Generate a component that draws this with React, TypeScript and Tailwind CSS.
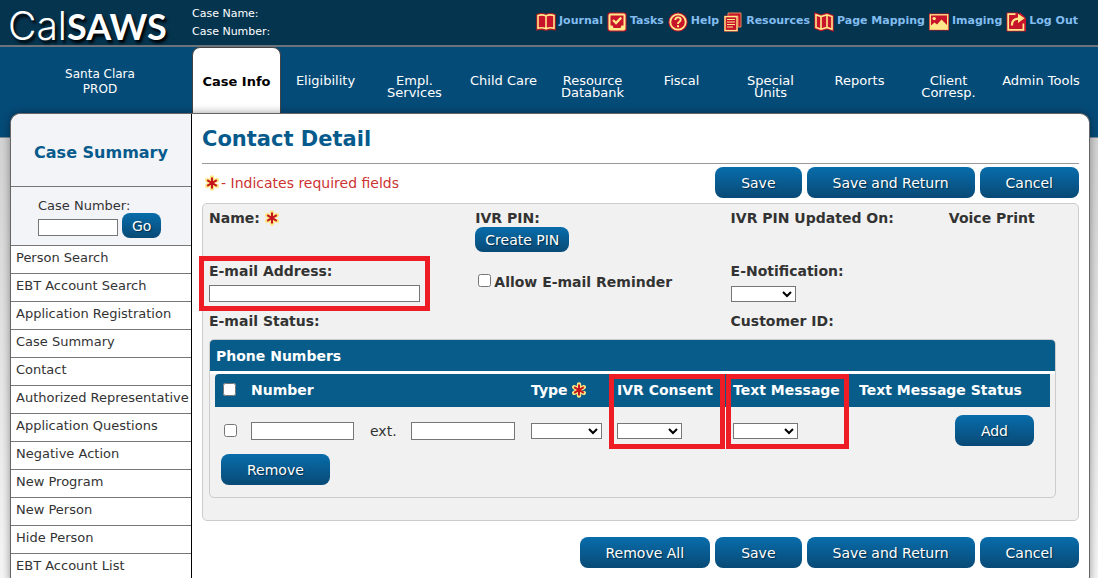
import React from 'react';

const RED = '#c8142a';
const CREAM = '#ffe88a';

function ToolIcon({ children }: { children: React.ReactNode }) {
  return (
    <svg viewBox="0 0 20 20" className="size-5 shrink-0" aria-hidden="true">
      {children}
    </svg>
  );
}

const JournalIcon = () => (
  <ToolIcon>
    <path d="M1 2.8Q5.5 1 10 2.8Q14.5 1 19 2.8V17.6Q14.5 16.6 10 18Q5.5 16.6 1 17.6Z" fill={RED} stroke="#b01a24" strokeWidth="1.6" />
    <path d="M2 3.6Q6 2 10 3.9Q14 2 18 3.6V16.2Q14 15.2 10 16.8Q6 15.2 2 16.2ZM10 3.9V16.8" fill={RED} stroke={CREAM} strokeWidth="1.6" />
  </ToolIcon>
);

const TasksIcon = () => (
  <ToolIcon>
    <rect x="0.5" y="0.5" width="19" height="19" rx="2.5" fill={RED} />
    <rect x="1.5" y="1.5" width="17" height="17" rx="2" fill={CREAM} />
    <path d="M3.5 3.5H16.5V13.5H14.5L13.5 16H6.5L5.5 13.5H3.5Z" fill={RED} />
    <path d="M6 8L9 11L14.2 5.6" fill="none" stroke={CREAM} strokeWidth="2.3" />
  </ToolIcon>
);

const HelpIcon = () => (
  <ToolIcon>
    <circle cx="10" cy="10" r="9.6" fill={RED} />
    <circle cx="10" cy="10" r="7.7" fill={RED} stroke={CREAM} strokeWidth="1.8" />
    <path d="M7.3 8Q7.3 5.4 10 5.4Q12.7 5.4 12.7 7.7Q12.7 9 11.2 9.8Q10 10.4 10 12" fill="none" stroke={CREAM} strokeWidth="1.9" />
    <rect x="9" y="13.2" width="2" height="2" fill={CREAM} />
  </ToolIcon>
);

const ResourcesIcon = () => (
  <ToolIcon>
    <path d="M5 1H18V15H15V4H5Z" fill={RED} stroke="#e08a5a" strokeWidth="1" />
    <rect x="1" y="3.6" width="14" height="16" fill={RED} />
    <rect x="2" y="4.6" width="12" height="14" fill={RED} stroke={CREAM} strokeWidth="1.4" />
    <path d="M4 7.5H12M4 10H12M4 12.5H12M4 15H10" stroke={CREAM} strokeWidth="1.2" />
  </ToolIcon>
);

const MapIcon = () => (
  <ToolIcon>
    <path d="M1.5 2L7 4L13 2L18.5 4V18L13 16L7 18L1.5 16Z" fill={RED} stroke={RED} strokeWidth="2.4" />
    <path d="M2 2.8L7 4.6L13 2.8L18 4.6V17.2L13 15.4L7 17.2L2 15.4ZM7 4.6V17.2M13 2.8V15.4" fill={RED} stroke={CREAM} strokeWidth="1.6" />
  </ToolIcon>
);

const ImagingIcon = () => (
  <ToolIcon>
    <rect x="0" y="1.5" width="20" height="17" fill={RED} />
    <rect x="1.3" y="2.8" width="17.4" height="14.4" fill={RED} stroke={CREAM} strokeWidth="1.3" />
    <circle cx="5.2" cy="6.6" r="1.7" fill={CREAM} />
    <path d="M2 17V13.5L5.5 10.5L8 12.5L12.5 7.5L18 13V17Z" fill={CREAM} />
  </ToolIcon>
);

const LogOutIcon = () => (
  <ToolIcon>
    <path d="M1 1H12V5L14 1L19.5 6V19H1Z" fill={RED} stroke={RED} strokeWidth="1" />
    <path d="M9.5 2.2H2.2V17.8H17.4V11.5" fill="none" stroke={CREAM} strokeWidth="1.7" />
    <path d="M6 13.5Q5.6 6.8 12.6 6.6" fill="none" stroke={CREAM} strokeWidth="2.2" />
    <path d="M12 1.8L18.6 6.3L12 11Z" fill={CREAM} />
  </ToolIcon>
);

const tools = [
  { label: 'Journal', Icon: JournalIcon },
  { label: 'Tasks', Icon: TasksIcon },
  { label: 'Help', Icon: HelpIcon },
  { label: 'Resources', Icon: ResourcesIcon },
  { label: 'Page Mapping', Icon: MapIcon },
  { label: 'Imaging', Icon: ImagingIcon },
  { label: 'Log Out', Icon: LogOutIcon },
];

const tabs = [
  'Eligibility',
  'Empl. Services',
  'Child Care',
  'Resource Databank',
  'Fiscal',
  'Special Units',
  'Reports',
  'Client Corresp.',
  'Admin Tools',
];

const sideLinks = [
  'Person Search',
  'EBT Account Search',
  'Application Registration',
  'Case Summary',
  'Contact',
  'Authorized Representative',
  'Application Questions',
  'Negative Action',
  'New Program',
  'New Person',
  'Hide Person',
  'EBT Account List',
];

const STAR = 'M8 2.4V13.6M3.2 5.2L12.8 10.8M12.8 5.2L3.2 10.8';

function Required() {
  return (
    <svg viewBox="0 0 16 16" className="inline-block size-4 shrink-0" role="img" aria-label="required">
      <path d={STAR} stroke="#ffe680" strokeWidth="4.4" strokeLinecap="round" />
      <path d={STAR} stroke="#c4161c" strokeWidth="2" />
    </svg>
  );
}

function Button({ children, small }: { children: React.ReactNode; small?: boolean }) {
  return (
    <button
      type="button"
      className={
        'rounded-lg bg-linear-to-b from-[#086dab] to-[#084a76] text-sm whitespace-nowrap text-white [text-shadow:1px_1px_1px_#022c48] ' +
        (small ? 'h-[25px] px-[10px]' : 'h-[31px] px-[26px]')
      }
    >
      {children}
    </button>
  );
}

const inputClass = 'border border-[#767676] bg-white px-1 text-xs';
const selectClass = 'h-4 border border-[#767676] bg-white text-xs text-black';

function Highlight({ place }: { place: string }) {
  return <span aria-hidden="true" className={'pointer-events-none absolute border-5 border-[#ee1c24] ' + place} />;
}

export default function App() {
  return (
    <div className="flex min-h-screen flex-col bg-linear-to-b from-[#c8c8c8] to-[#f6f6f6] font-['DejaVu_Sans',Verdana,sans-serif] text-[#333]">
      <header className="flex h-[47px] shrink-0 border-b-2 border-[#6b747b] bg-[#05344f]">
        <a
          href="#home"
          className="w-48 shrink-0 pt-0.5 pl-2 text-[36px] leading-[48px] whitespace-nowrap text-white [text-shadow:2px_3px_3px_#000]"
        >
          <span className="font-[Inter,sans-serif] text-[39px] font-light">Cal</span>
          <span className="font-[Lato,sans-serif] font-bold">SAWS</span>
        </a>
        <div className="pt-[5px] text-[11px] leading-[18px] whitespace-nowrap text-white">
          <div>Case Name:</div>
          <div>Case Number:</div>
        </div>
        <nav aria-label="Tools" className="ml-auto flex gap-1 self-start pt-3 pr-5">
          {tools.map(({ label, Icon }) => (
            <a
              key={label}
              href="#tool"
              className="flex items-center gap-[3px] text-[11px] leading-5 font-bold whitespace-nowrap text-[#82bdf0]"
            >
              <Icon />
              <span className="-mt-0.5">{label}</span>
            </a>
          ))}
        </nav>
      </header>

      <nav
        aria-label="Main"
        className="grid h-[91px] shrink-0 grid-cols-[192px_repeat(9,minmax(0,1fr))_96px] border-b border-[#7c8c98] bg-[#054b78] pr-[9px] text-center text-[13px] leading-3 text-white"
      >
        <div className="pt-5 pr-2 pl-4 text-xs leading-[15px]">
          Santa Clara
          <br />
          PROD
        </div>
        <a
          href="#case-info"
          className="flex h-[66px] items-center justify-center rounded-t-lg border border-b-0 border-[#444] bg-white pt-0.5 text-[13px] font-bold whitespace-nowrap text-black"
        >
          Case Info
        </a>
        {tabs.map((tab) => (
          <a key={tab} href="#tab" className="px-1 pt-7">
            {tab}
          </a>
        ))}
      </nav>

      <div className="-mt-[25px] mr-2 ml-[10px] flex grow rounded-t-[10px] border border-b-0 border-[#666] bg-white shadow-[0_0_8px_#0006]">
        <aside className="w-[181px] shrink-0 border-r border-black text-[13px]">
          <h2 className="flex h-[73px] items-center justify-center rounded-tl-[10px] border-b border-[#777] bg-[#f3f4f7] pt-1.5 text-base font-bold text-[#065a8c]">
            Case Summary
          </h2>
          <form className="h-[59px] border-b border-[#777] bg-[#f3f4f7] pt-[11px] pl-[27px]">
            <label htmlFor="case-number" className="block leading-[15px]">
              Case Number:
            </label>
            <div className="flex items-center gap-1">
              <input id="case-number" className={inputClass + ' mt-1 h-[17px] w-20'} />
              <Button small>Go</Button>
            </div>
          </form>
          <ul>
            {sideLinks.map((link) => (
              <li key={link} className="h-7 border-b border-[#777] pl-[5px] leading-6 whitespace-nowrap">
                <a href="#link">{link}</a>
              </li>
            ))}
          </ul>
        </aside>

        <main className="min-w-0 grow px-[10px] text-sm">
          <h1 className="h-[50px] border-b border-[#999] pt-[9px] text-[21px] leading-8 font-bold text-[#065a8c]">
            Contact Detail
          </h1>
          <div className="flex items-center pt-[3px]">
            <p className="flex items-center gap-px pl-[2px] text-[#cc3333]">
              <Required />- Indicates required fields
            </p>
            <div className="ml-auto flex gap-[5px]">
              <Button>Save</Button>
              <Button>Save and Return</Button>
              <Button>Cancel</Button>
            </div>
          </div>

          <section className="mt-[5px] rounded-[5px] border border-[#ccc] bg-[#f1f1f1] px-[6px] pt-[5px] pb-[22px]">
            <div className="grid grid-cols-[266fr_255fr_218fr_123fr] font-bold">
              <div className="h-[53px] leading-[18px]">
                <span className="flex items-center gap-1">
                  Name: <Required />
                </span>
              </div>
              <div className="leading-[18px]">
                IVR PIN:
                <div className="flex font-normal">
                  <Button small>Create PIN</Button>
                </div>
              </div>
              <div className="leading-[18px] whitespace-nowrap">IVR PIN Updated On:</div>
              <div className="leading-[18px] whitespace-nowrap">Voice Print</div>

              <div className="relative h-[50px] leading-[18px]">
                <label htmlFor="email" className="block">
                  E-mail Address:
                </label>
                <input id="email" type="email" className={inputClass + ' mt-[5px] block h-[17px] w-[211px]'} />
                <Highlight place="-top-[6px] -left-[10px] h-[55px] w-[231px]" />
              </div>
              <label className="flex items-start gap-[3px] pt-[11px] pl-[3px] leading-[18px] whitespace-nowrap">
                <input type="checkbox" className="mt-px size-[13px]" />
                Allow E-mail Reminder
              </label>
              <div className="leading-[18px]">
                <label htmlFor="enotification" className="block">
                  E-Notification:
                </label>
                <select id="enotification" className={selectClass + ' mt-[6px] block w-[65px]'} />
              </div>
              <div />

              <div className="leading-[18px]">E-mail Status:</div>
              <div />
              <div className="leading-[18px]">Customer ID:</div>
              <div />
            </div>

            <section className="mt-[9px] mr-4 rounded-[5px] border border-[#ccc]">
              <h3 className="h-[31px] rounded-t-[4px] bg-[#085c8a] pl-[6px] leading-8 font-bold text-white">Phone Numbers</h3>
              <div className="border-t-3 border-white px-[5px] pb-3">
                <table className="w-full table-fixed border-separate border-spacing-0 text-left">
                  <colgroup>
                    <col className="w-9" />
                    <col className="w-[280px]" />
                    <col className="w-[86px]" />
                    <col className="w-[116px]" />
                    <col className="w-[126px]" />
                    <col />
                  </colgroup>
                  <thead className="text-white">
                    <tr className="h-[33px] whitespace-nowrap [&>th]:bg-[#085c8a] [&>th]:pb-0.5">
                      <th className="rounded-tl-[4px] pl-2">
                        <input type="checkbox" aria-label="Select all" className="block size-[13px]" />
                      </th>
                      <th>Number</th>
                      <th>
                        <span className="flex items-center gap-[3px]">
                          Type
                          <Required />
                        </span>
                      </th>
                      <th className="relative">
                        IVR Consent
                        <Highlight place="top-0 -left-2 h-[75px] w-[116px]" />
                      </th>
                      <th className="relative">
                        Text Message
                        <Highlight place="top-0 -left-[7px] h-[75px] w-[123px]" />
                      </th>
                      <th>Text Message Status</th>
                    </tr>
                  </thead>
                  <tbody>
                    <tr className="h-[47px]">
                      <td className="pl-[9px]">
                        <input type="checkbox" aria-label="Select number" className="block size-[13px]" />
                      </td>
                      <td>
                        <div className="flex items-center">
                          <input aria-label="Number" className={inputClass + ' h-[18px] w-[103px]'} />
                          <label htmlFor="ext" className="w-[57px] pl-4">
                            ext.
                          </label>
                          <input id="ext" className={inputClass + ' h-[18px] w-[104px]'} />
                        </div>
                      </td>
                      <td>
                        <select aria-label="Type" className={selectClass + ' block w-[71px]'} />
                      </td>
                      <td>
                        <select aria-label="IVR Consent" className={selectClass + ' block w-[65px]'} />
                      </td>
                      <td>
                        <select aria-label="Text Message" className={selectClass + ' block w-[65px]'} />
                      </td>
                      <td>
                        <div className="flex justify-end pr-4">
                          <Button>Add</Button>
                        </div>
                      </td>
                    </tr>
                  </tbody>
                </table>
                <div className="flex pl-[6px]">
                  <Button>Remove</Button>
                </div>
              </div>
            </section>
          </section>

          <div className="mt-4 flex justify-end gap-[5px]">
            <Button>Remove All</Button>
            <Button>Save</Button>
            <Button>Save and Return</Button>
            <Button>Cancel</Button>
          </div>
        </main>
      </div>
    </div>
  );
}
